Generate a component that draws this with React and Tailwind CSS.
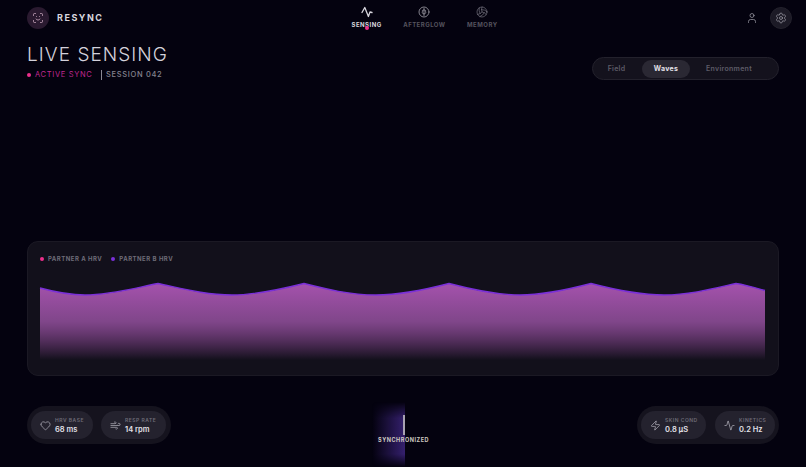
import React from 'react';
import { Activity, Volleyball, User, Settings, Heart, Wind, Zap, ScanFace } from 'lucide-react';

const PulseIcon = ({ className }) => (
  <svg width="12" height="12" viewBox="0 0 12 12" fill="none" stroke="currentColor" strokeWidth="1.300" strokeLinecap="round" strokeLinejoin="round" className={className}>
    <path d="M1 6.500 L3.800 1.500 L7.400 10.500 L9 6 L11 6.500" />
  </svg>
);

const GlowIcon = ({ className }) => (
  <svg width="12" height="12" viewBox="0 0 12 12" fill="none" stroke="currentColor" strokeWidth="1" strokeLinecap="round" className={className}>
    <circle cx="6" cy="6" r="5" />
    <path d="M6 2.500 V9.500 M6 4 C4.500 3.600 3.800 4.800 4.500 5.800 C3.800 6.800 4.500 8 6 7.800 M6 4 C7.500 3.600 8.200 4.800 7.500 5.800 C8.200 6.800 7.500 8 6 7.800" />
  </svg>
);

const Metric = ({ icon: Icon, label, value, className }) => (
  <div className={`flex h-7 items-center gap-1 rounded-full bg-[#24222e] pl-[9px] ${className}`}>
    <Icon size={11} strokeWidth={1.5} className="text-[#b9b7c2]" />
    <div className="flex flex-col">
      <span className="text-[5px] leading-[8px] font-semibold tracking-[0.1em] text-[#6e6c78]">{label}</span>
      <span className="text-[7.500px] leading-[11px] font-semibold text-[#e2e0e8]">{value}</span>
    </div>
  </div>
);

const NavItem = ({ icon: Icon, label, active, size }) => (
  <div className="relative flex flex-col items-center gap-[3px]">
    <Icon size={size} strokeWidth={1.2} className={active ? 'text-[#d8d6de]' : 'text-[#85838e]'} />
    <span className={`text-[6px] leading-[8px] font-bold tracking-[0.08em] ${active ? 'text-[#d8d6de]' : 'text-[#55535e]'}`}>{label}</span>
    {active && <span className="absolute -bottom-[1px] h-1 w-1 rounded-full bg-[#ec2f8c]" />}
  </div>
);

const wavePath = 'M40 288 C55 292 70 295 85 295 C110 295 135 288 158 283.500 C180 288 205 295 232 295 C255 295 282 289 304 283.500 C326 289 350 295 376 295 C400 295 428 289 449 283.500 C470 289 495 295 520 295 C545 295 570 289 591 283.500 C612 289 640 295 664 295 C690 295 716 288 736 283.500 C746 285 756 288 765 290.500';

const WaveChart = () => (
  <svg width="752" height="135" viewBox="27 241 752 135" className="absolute -top-px -left-px">
    <defs>
      <linearGradient id="waveFill" x1="0" y1="283" x2="0" y2="360" gradientUnits="userSpaceOnUse">
        <stop offset="0" stopColor="#a552ad" />
        <stop offset="0.5" stopColor="#80468a" />
        <stop offset="1" stopColor="#a552ad" stopOpacity="0" />
      </linearGradient>
    </defs>
    <path d={`${wavePath} L765 360 L40 360 Z`} fill="url(#waveFill)" />
    <path d={wavePath} fill="none" stroke="#7a30d8" strokeWidth="1.300" />
  </svg>
);

export default function App() {
  return (
    <div className="relative flex h-screen w-full flex-col overflow-hidden bg-[#04020f] px-[27px] font-['Inter',sans-serif]">
      <header className="grid h-9 shrink-0 grid-cols-3 items-center">
        <div className="flex items-center gap-2">
          <div className="flex h-[22px] w-[22px] items-center justify-center rounded-full bg-[#2a1a30]">
            <ScanFace size={12} strokeWidth={1.5} className="text-[#d9b5cc]" />
          </div>
          <span className="text-[9px] font-bold tracking-[0.17em] text-[#d8d6de]">RESYNC</span>
        </div>
        <nav className="flex justify-center gap-[21.500px] self-start pt-[6px] pl-[43px]">
          <NavItem icon={PulseIcon} label="SENSING" active />
          <NavItem icon={GlowIcon} label="AFTERGLOW" />
          <NavItem icon={Volleyball} size={12} label="MEMORY" />
        </nav>
        <div className="-mr-[13px] flex items-center justify-end gap-3">
          <User size={12} strokeWidth={1.5} className="text-[#9a98a3]" />
          <div className="flex h-[22px] w-[22px] items-center justify-center rounded-full border border-[#23212c] bg-[#1c1a26]">
            <Settings size={12} strokeWidth={1.5} className="text-[#9a98a3]" />
          </div>
        </div>
      </header>

      <div className="mt-[8px] flex items-start justify-between">
        <div>
          <h1 className="text-[19px] leading-[21px] font-light tracking-[0.055em] text-[#d3d1db]">LIVE SENSING</h1>
          <div className="mt-[5px] flex items-center text-[7.500px] leading-[10px] tracking-[0.09em]">
            <span className="mr-1 h-1 w-1 rounded-full bg-[#ec2f8c]" />
            <span className="text-[#c0288f]">ACTIVE SYNC</span>
            <span className="mr-1 ml-2 h-[10px] w-[1.500px] bg-[#8a8894]" />
            <span className="font-medium text-[#85838e]">SESSION 042</span>
          </div>
        </div>
        <div className="mt-[13px] flex h-[23px] w-[187px] items-center rounded-full border border-[#23212c] bg-[#14121d] pl-[2px] text-[7px] leading-[10px] font-semibold tracking-[0.04em]">
          <span className="mr-[4px] w-[43px] pt-[1px] text-center text-[#5e5c68]">Field</span>
          <span className="flex h-[18px] w-[48px] items-center justify-center rounded-full bg-[#2a2833] pt-[1px] font-bold text-[#e2e0e8]">Waves</span>
          <span className="w-[78px] pt-[1px] text-center text-[#5e5c68]">Environment</span>
        </div>
      </div>

      <div className="flex-1" />

      <section className="relative h-[135px] shrink-0 rounded-[11px] border border-[#1b1924] bg-[#12101b]">
        <WaveChart />
        <div className="relative flex items-center gap-[9px] pt-[12.500px] pl-[12px] text-[6px] leading-[8px] font-bold tracking-[0.08em] text-[#6e6c78]">
          <span className="flex items-center gap-1"><span className="h-1 w-1 rounded-full bg-[#ec2f8c]" />PARTNER A HRV</span>
          <span className="flex items-center gap-1"><span className="h-1 w-1 rounded-full bg-[#7a30d8]" />PARTNER B HRV</span>
        </div>
      </section>

      <footer className="mt-[30px] mb-[23px] flex shrink-0 items-center justify-between">
        <div className="flex h-[38px] w-[144px] items-center gap-2 rounded-full bg-[#15131e] px-1">
          <Metric icon={Heart} label="HRV BASE" value="68 ms" className="w-[62px]" />
          <Metric icon={Wind} label="RESP RATE" value="14 rpm" className="w-[65px]" />
        </div>
        <div className="flex h-[38px] w-[142px] items-center gap-[9px] rounded-full bg-[#15131e] px-1">
          <Metric icon={Zap} label="SKIN COND" value="0.8 µS" className="w-[65px]" />
          <Metric icon={Activity} label="KINETICS" value="0.2 Hz" className="w-[60px]" />
        </div>
      </footer>

      <div className="absolute top-[402px] left-[372px] h-[65px] w-[33px] bg-gradient-to-r from-transparent to-[#35206e] [mask-image:linear-gradient(to_bottom,transparent,black_25%,black_80%,transparent)]" />
      <div className="absolute top-[415px] left-[402.500px] h-[20px] w-[2px] bg-[#a8a2b2]" />
      <span className="absolute top-[436px] left-[378px] text-[5.500px] leading-[8px] font-bold tracking-[0.1em] text-[#cfc9c0]">SYNCHRONIZED</span>
    </div>
  );
}
